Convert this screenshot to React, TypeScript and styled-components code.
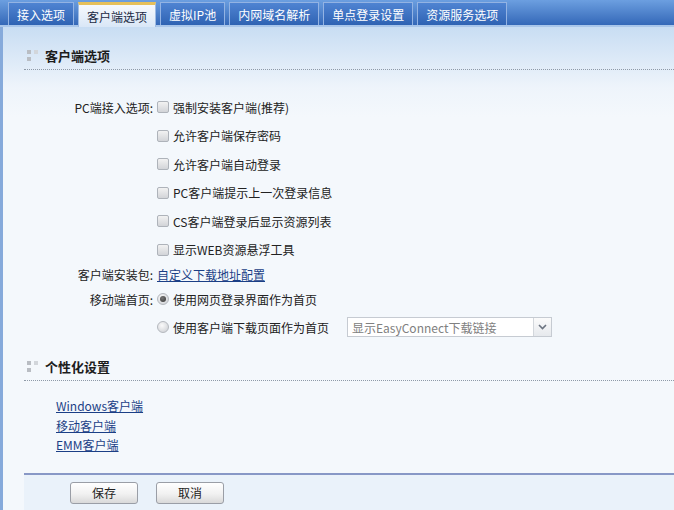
import React from 'react';
import styled, { createGlobalStyle } from 'styled-components';

const GlobalStyle = createGlobalStyle`
  html, body {
    margin: 0;
    padding: 0;
  }
  body {
    width: 674px;
    height: 510px;
    overflow: hidden;
    font-family: "Noto Sans CJK SC", "DejaVu Sans", sans-serif;
    font-size: 12px;
    color: #222;
    background: #f4f8fc;
  }
`;

const Page = styled.div({
  display: 'flex',
  flexDirection: 'column',
  width: 674,
  height: 510,
});

const TabBar = styled.div({
  display: 'flex',
  alignItems: 'flex-end',
  gap: 4,
  height: 27,
  paddingLeft: 8,
  boxSizing: 'border-box',
  background: 'linear-gradient(#6c9fe0, #3468b8)',
  borderBottom: '2px solid #a9c6ea',
  flexShrink: 0,
});

const Tab = styled.div<{ $active?: boolean }>`
  display: flex;
  align-items: center;
  box-sizing: border-box;
  height: ${(p) => (p.$active ? 25 : 23)}px;
  padding: 0 8px;
  font-size: 12px;
  white-space: nowrap;
  color: ${(p) => (p.$active ? '#1b2a44' : '#fff')};
  background: ${(p) =>
    p.$active
      ? 'linear-gradient(#f6f9fd, #d9e7f7)'
      : 'linear-gradient(#4f84d2, #2f63b3)'};
  border: 1px solid ${(p) => (p.$active ? '#9dbbe4' : '#93b3e3')};
  border-top: ${(p) => (p.$active ? '3px solid #e6c05a' : '1px solid #93b3e3')};
  border-bottom: none;
  margin-bottom: ${(p) => (p.$active ? -2 : 0)}px;
`;

const Content = styled.div({
  flex: 1,
  display: 'flex',
  flexDirection: 'column',
  borderLeft: '3px solid #86aadb',
  paddingLeft: 21,
  background: 'linear-gradient(#c8ddf3 0px, #eef4fb 60px, #f4f8fc 90px, #f4f8fc 100%)',
});

const SectionHeader = styled.div<{ $top: number }>`
  display: flex;
  align-items: center;
  gap: 7px;
  height: 28px;
  margin-top: ${(p) => p.$top}px;
  padding-left: 3px;
  border-bottom: 1px dotted #8e9aa8;
  font-size: 13px;
  font-weight: bold;
  color: #1d1d1d;
`;

const Dots = styled.div({
  display: 'grid',
  gridTemplateColumns: '4px 4px',
  gridTemplateRows: '4px 4px',
  gap: 3,
});

const Dot = styled.span<{ $shade: string }>`
  display: block;
  width: 4px;
  height: 4px;
  background: ${(p) => p.$shade};
`;

const Form = styled.div({
  display: 'flex',
  flexDirection: 'column',
  marginTop: 23,
});

const Row = styled.div<{ $h: number }>`
  display: grid;
  grid-template-columns: 129px 1fr;
  column-gap: 4px;
  align-items: center;
  height: ${(p) => p.$h}px;
`;

const Label = styled.div({
  textAlign: 'right',
  color: '#222',
  whiteSpace: 'nowrap',
});

const Field = styled.div({
  display: 'flex',
  alignItems: 'center',
  gap: 4,
  whiteSpace: 'nowrap',
});

const Checkbox = styled.span({
  width: 12,
  height: 12,
  boxSizing: 'border-box',
  border: '1px solid #aeb3ba',
  borderRadius: 2,
  background: 'linear-gradient(#f2f2f2, #d2d4d8)',
  flexShrink: 0,
});

const Radio = styled.span<{ $checked?: boolean }>`
  position: relative;
  width: 12px;
  height: 12px;
  box-sizing: border-box;
  border: 1px solid #b4b8be;
  border-radius: 50%;
  background: radial-gradient(circle at 40% 35%, #fafafa, #c9ccd1);
  flex-shrink: 0;
  &::after {
    content: '';
    display: ${(p) => (p.$checked ? 'block' : 'none')};
    position: absolute;
    left: 2px;
    top: 2px;
    width: 6px;
    height: 6px;
    border-radius: 50%;
    background: radial-gradient(circle at 40% 35%, #777, #333);
  }
`;

const Link = styled.a({
  color: '#1b3f86',
  textDecoration: 'underline',
  cursor: 'pointer',
});

const Select = styled.div({
  display: 'flex',
  marginLeft: 14,
  width: 205,
  height: 20,
  boxSizing: 'border-box',
  border: '1px solid #c6cbd2',
  background: '#fff',
  color: '#808080',
});

const SelectText = styled.div({
  flex: 1,
  display: 'flex',
  alignItems: 'center',
  paddingLeft: 4,
});

const SelectArrow = styled.div({
  width: 17,
  display: 'flex',
  alignItems: 'center',
  justifyContent: 'center',
  borderLeft: '1px solid #d3d7dc',
  background: 'linear-gradient(#fbfbfb, #e6e9ed)',
});

const Links = styled.div({
  display: 'flex',
  flexDirection: 'column',
  paddingLeft: 32,
  paddingTop: 15,
  lineHeight: '19.5px',
});

const Footer = styled.div({
  marginTop: 'auto',
  display: 'flex',
  alignItems: 'center',
  gap: 18,
  height: 35,
  paddingLeft: 46,
  borderTop: '2px solid #8898c6',
  background: '#eaf2fa',
});

const Button = styled.button({
  width: 68,
  height: 22,
  boxSizing: 'border-box',
  border: '1px solid #9a9ea6',
  borderRadius: 3,
  background: 'linear-gradient(#ffffff 0%, #f1f1f1 55%, #d9d9d9 100%)',
  fontFamily: 'inherit',
  fontSize: 12,
  color: '#222',
  padding: 0,
});

const tabs = ['接入选项', '客户端选项', '虚拟IP池', '内网域名解析', '单点登录设置', '资源服务选项'];

const pcOptions = [
  '强制安装客户端(推荐)',
  '允许客户端保存密码',
  '允许客户端自动登录',
  'PC客户端提示上一次登录信息',
  'CS客户端登录后显示资源列表',
  '显示WEB资源悬浮工具',
];

function Header({ title, top }: { title: string; top: number }) {
  return (
    <SectionHeader $top={top}>
      <Dots>
        <Dot $shade="#b9bdc3" />
        <Dot $shade="#d2d6db" />
        <Dot $shade="#b9bdc3" />
        <Dot $shade="transparent" />
      </Dots>
      {title}
    </SectionHeader>
  );
}

export default function App() {
  return (
    <Page>
      <GlobalStyle />
      <TabBar>
        {tabs.map((t) => (
          <Tab key={t} $active={t === '客户端选项'}>
            {t}
          </Tab>
        ))}
      </TabBar>
      <Content>
        <Header title="客户端选项" top={14} />
        <Form>
          {pcOptions.map((o, i) => (
            <Row key={o} $h={28.5}>
              <Label>{i === 0 ? 'PC端接入选项:' : ''}</Label>
              <Field>
                <Checkbox />
                {o}
              </Field>
            </Row>
          ))}
          <Row $h={20}>
            <Label>客户端安装包:</Label>
            <Field>
              <Link>自定义下载地址配置</Link>
            </Field>
          </Row>
          <Row $h={30}>
            <Label>移动端首页:</Label>
            <Field>
              <Radio $checked />
              使用网页登录界面作为首页
            </Field>
          </Row>
          <Row $h={26}>
            <Label />
            <Field>
              <Radio />
              使用客户端下载页面作为首页
              <Select>
                <SelectText>显示EasyConnect下载链接</SelectText>
                <SelectArrow>
                  <svg width="9" height="6" viewBox="0 0 9 6">
                    <path d="M1 1 L4.5 4.5 L8 1" stroke="#6b7380" strokeWidth="1.6" fill="none" />
                  </svg>
                </SelectArrow>
              </Select>
            </Field>
          </Row>
        </Form>
        <Header title="个性化设置" top={12} />
        <Links>
          <Link>Windows客户端</Link>
          <Link>移动客户端</Link>
          <Link>EMM客户端</Link>
        </Links>
        <Footer>
          <Button>保存</Button>
          <Button>取消</Button>
        </Footer>
      </Content>
    </Page>
  );
}
